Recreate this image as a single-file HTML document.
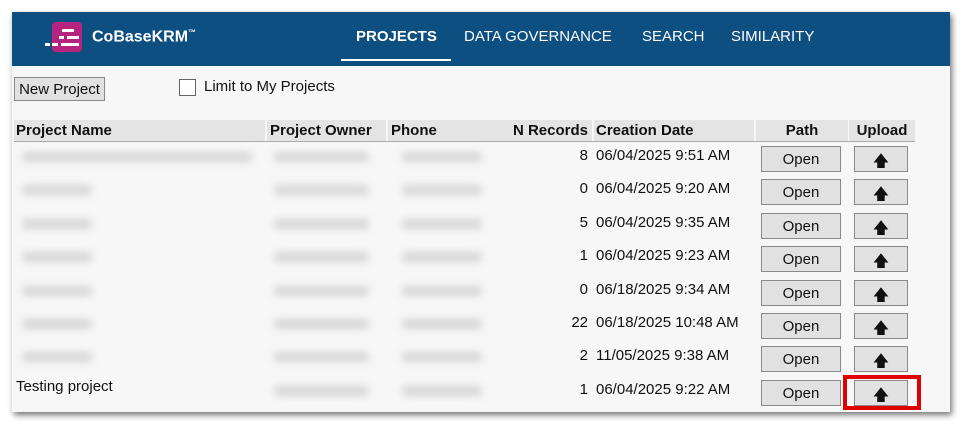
<!DOCTYPE html><html><head><style>
*{margin:0;padding:0;box-sizing:border-box}
body{width:964px;height:428px;background:#fff;font-family:"Liberation Sans",sans-serif;position:relative;overflow:hidden}
#win{position:absolute;left:12px;top:12px;width:938px;height:400px;background:#f7f7f7;box-shadow:2px 3px 6px rgba(0,0,0,.55);overflow:hidden}
#hdr{position:absolute;left:0;top:0;width:938px;height:54px;background:#0d4f80}
.nav{position:absolute;top:16px;color:#fff;font-size:15px}
.a{position:absolute;font-size:15px;color:#111;white-space:nowrap}
.hd{position:absolute;top:108px;height:21px;background:#e4e4e4;font-weight:bold;font-size:15px;padding-top:2px;color:#111}
.btn{position:absolute;background:#e1e1e1;border:1px solid #8a8a8a;font-size:15px;text-align:center;color:#111}
.bl{position:absolute;height:10px;background:#d6d6d6;filter:blur(4px);border-radius:4px}
</style></head><body><div id="win">
<div id="hdr">
<div style="position:absolute;left:40px;top:10px;width:30px;height:30px;background:#b6247f;border-radius:4px"></div>
<div style="position:absolute;left:50px;top:17px;width:12px;height:3px;background:#fff"></div>
<div style="position:absolute;left:47px;top:24px;width:5px;height:3px;background:#fff"></div>
<div style="position:absolute;left:55px;top:24px;width:12px;height:3px;background:#fff"></div>
<div style="position:absolute;left:33px;top:31px;width:5px;height:3px;background:#fff"></div>
<div style="position:absolute;left:40px;top:31px;width:6px;height:3px;background:#fff"></div>
<div style="position:absolute;left:49px;top:31px;width:18px;height:3px;background:#fff"></div>
<div class="nav" style="left:80px;font-weight:bold;font-size:16px">CoBaseKRM<sup style="font-size:8px">™</sup></div>
<div class="nav" style="left:344px;font-weight:bold">PROJECTS</div>
<div style="position:absolute;left:329px;top:47px;width:110px;height:2px;background:#fff"></div>
<div class="nav" style="left:452px">DATA GOVERNANCE</div>
<div class="nav" style="left:630px">SEARCH</div>
<div class="nav" style="left:719px">SIMILARITY</div>
</div>
<div class="btn" style="left:2px;top:65px;width:91px;height:24px;padding-top:3px">New Project</div>
<div style="position:absolute;left:167px;top:67px;width:17px;height:17px;border:1px solid #666;background:#fff"></div>
<div class="a" style="left:192px;top:66px">Limit to My Projects</div>
<div class="hd" style="left:2px;width:251px;padding-left:2px">Project Name</div>
<div class="hd" style="left:255px;width:119px;padding-left:3px">Project Owner</div>
<div class="hd" style="left:376px;width:117px;padding-left:3px">Phone</div>
<div class="hd" style="left:493px;width:87px;text-align:right;padding-right:4px">N Records</div>
<div class="hd" style="left:582px;width:160px;padding-left:2px">Creation Date</div>
<div class="hd" style="left:744px;width:92px;text-align:center">Path</div>
<div class="hd" style="left:837px;width:66px;text-align:center">Upload</div>
<div style="position:absolute;left:2px;top:129px;width:901px;height:1px;background:#aaa"></div>
<div id="rows"></div>
<div class="a" style="left:4px;top:366px">Testing project</div>
</div>
<div style="position:absolute;left:843px;top:375px;width:78px;height:35px;border:4px solid #e00000"></div>
<script>
var d=[["8","06/04/2025 9:51 AM"],["0","06/04/2025 9:20 AM"],["5","06/04/2025 9:35 AM"],["1","06/04/2025 9:23 AM"],["0","06/18/2025 9:34 AM"],["22","06/18/2025 10:48 AM"],["2","11/05/2025 9:38 AM"],["1","06/04/2025 9:22 AM"],["1","06/04/2025 9:22 AM"]];
var h="";
d.forEach(function(r,i){var t=132+i*33.4;
h+='<div class="a" style="left:493px;width:83px;text-align:right;top:'+(t+3)+'px">'+r[0]+'</div>';
h+='<div class="a" style="left:584px;top:'+(t+3)+'px">'+r[1]+'</div>';
h+='<div class="btn" style="left:749px;top:'+(t+2)+'px;width:80px;height:26px;padding-top:4px">Open</div>';
h+='<div class="btn" style="left:842px;top:'+(t+2)+'px;width:54px;height:26px;padding-top:3px;font-size:16px">&#129093;</div>';
if(i!=7)h+='<div class="bl" style="left:10px;top:'+(t+8)+'px;width:'+(i==0?230:70)+'px"></div>';
h+='<div class="bl" style="left:262px;top:'+(t+8)+'px;width:95px"></div><div class="bl" style="left:390px;top:'+(t+8)+'px;width:80px"></div>';
});
document.getElementById("rows").innerHTML=h;
</script>
</body></html>
